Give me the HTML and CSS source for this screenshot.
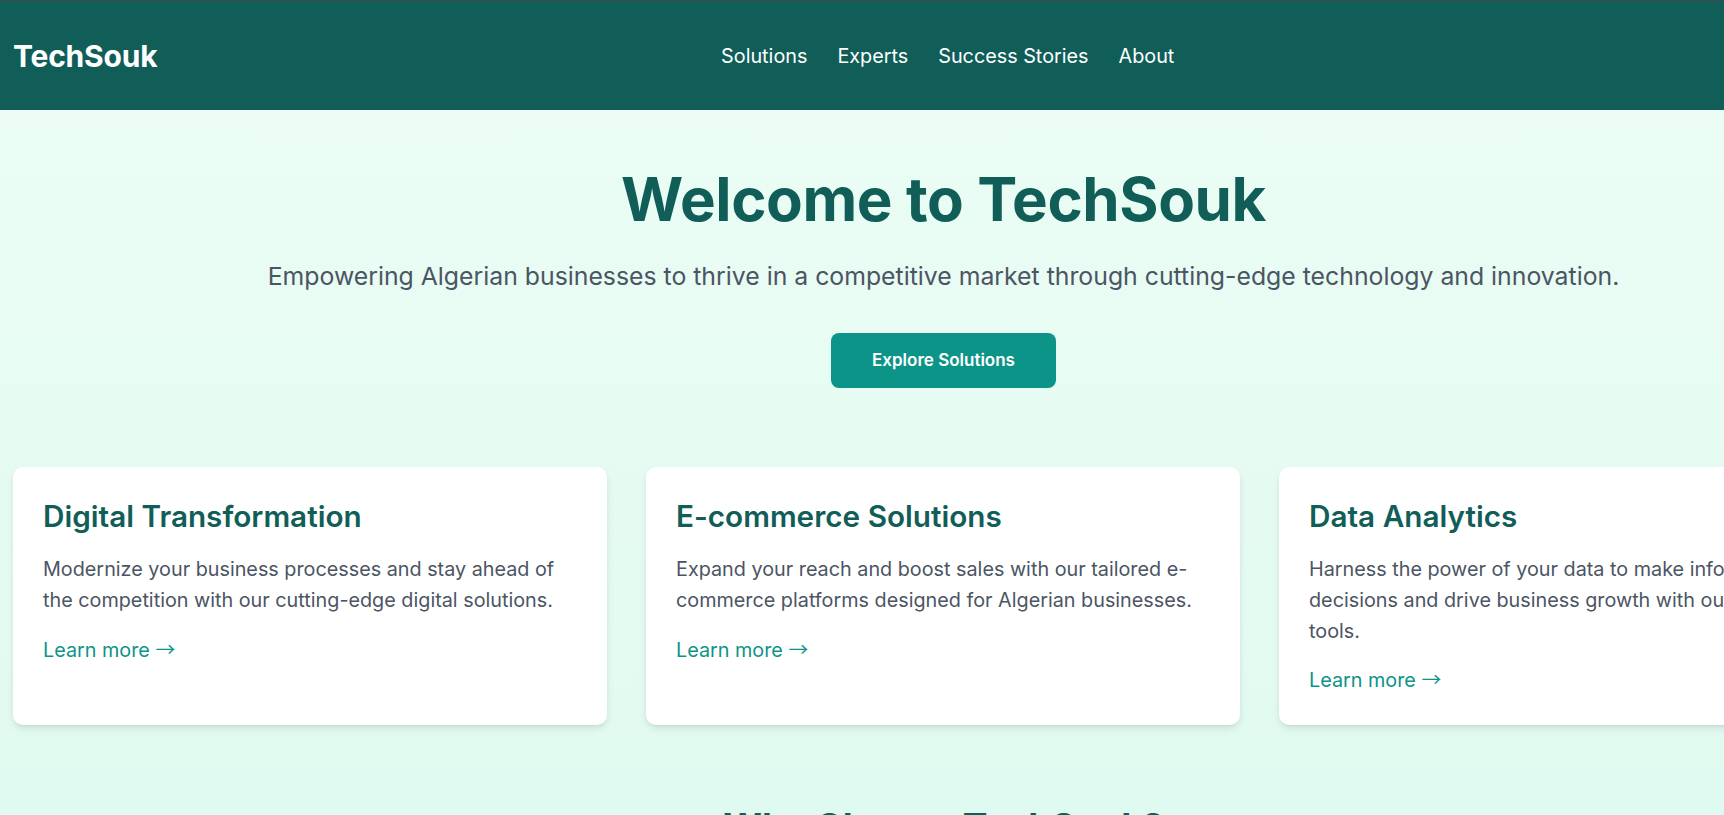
FILE: index.html
```html
<!DOCTYPE html>
<html lang="en">
<head>
<meta charset="utf-8">
<title>TechSouk</title>
<link rel="stylesheet" href="styles.css">
</head>
<body>
<div class="page">
  <header class="site-header">
    <a class="logo" href="#">TechSouk</a>
    <nav class="main-nav">
      <a href="#">Solutions</a>
      <a href="#">Experts</a>
      <a href="#">Success Stories</a>
      <a href="#">About</a>
    </nav>
    <div class="header-spacer"></div>
  </header>

  <section class="hero">
    <h1 class="hero-title">Welcome to TechSouk</h1>
    <p class="hero-sub">Empowering Algerian businesses to thrive in a competitive market through cutting-edge technology and innovation.</p>
    <a class="btn-primary" href="#">Explore Solutions</a>

    <div class="cards">
      <article class="card">
        <h3 class="card-title">Digital Transformation</h3>
        <p class="card-text">Modernize your business processes and stay ahead of the competition with our cutting-edge digital solutions.</p>
        <a class="card-link" href="#">Learn more <span class="arrow">→</span></a>
      </article>
      <article class="card">
        <h3 class="card-title">E-commerce Solutions</h3>
        <p class="card-text">Expand your reach and boost sales with our tailored e-commerce platforms designed for Algerian businesses.</p>
        <a class="card-link" href="#">Learn more <span class="arrow">→</span></a>
      </article>
      <article class="card">
        <h3 class="card-title">Data Analytics</h3>
        <p class="card-text">Harness the power of your data to make informed decisions and drive business growth with our analytics tools.</p>
        <a class="card-link" href="#">Learn more <span class="arrow">→</span></a>
      </article>
    </div>
  </section>

  <section class="why">
    <h2 class="why-title">Why Choose TechSouk?</h2>
  </section>
</div>
</body>
</html>
```

FILE: styles.css
```css
* { box-sizing: border-box; }

html, body {
  margin: 0;
  padding: 0;
}

body {
  font-family: Inter, "Noto Sans", sans-serif;
  background: #dffaf0;
}

a { text-decoration: none; }

.page {
  width: 1887px;
}

.site-header {
  height: 110px;
  background: #115e59;
  border-top: 1px solid #3f4946;
  padding: 0 13px;
  display: flex;
  align-items: center;
  justify-content: space-between;
}

.logo {
  color: #ffffff;
  font-size: 30px;
  font-weight: 700;
  letter-spacing: -0.2px;
}

.main-nav {
  display: flex;
  gap: 30px;
}

.main-nav a {
  color: #ffffff;
  font-size: 19.8px;
  font-weight: 400;
}

.header-spacer {
  width: 136px;
}

.hero {
  background: linear-gradient(180deg, #ebfdf5 0%, #e1faf0 100%);
  padding: 59px 13px 43px;
  text-align: center;
}

.hero-title {
  margin: 0;
  font-size: 60px;
  line-height: 60px;
  font-weight: 700;
  color: #115e59;
  letter-spacing: -0.4px;
}

.hero-sub {
  margin: 31px 0 0;
  font-size: 24.8px;
  line-height: 32px;
  color: #4b5563;
}

.btn-primary {
  display: inline-block;
  margin-top: 41px;
  background: #0d9488;
  color: #ffffff;
  font-size: 17px;
  font-weight: 600;
  line-height: 24px;
  padding: 15px 41px 16px;
  border-radius: 8px;
}

.cards {
  margin-top: 79px;
  display: grid;
  grid-template-columns: repeat(3, 594px);
  gap: 39px;
  text-align: left;
}

.card {
  background: #ffffff;
  border-radius: 10px;
  padding: 31px 30px 29px;
  box-shadow: 0 4px 8px -1px rgba(0, 0, 0, 0.1), 0 2px 4px -2px rgba(0, 0, 0, 0.08);
}

.card-title {
  margin: 0;
  font-size: 29.7px;
  line-height: 37px;
  font-weight: 600;
  color: #115e59;
}

.card-text {
  margin: 19px 0 0;
  font-size: 19.8px;
  line-height: 30.8px;
  color: #4b5563;
}

.card-link {
  display: inline-block;
  margin-top: 19px;
  font-size: 19.8px;
  line-height: 30.8px;
  height: 30.8px;
  color: #0d9488;
}

.arrow {
  font-family: "Noto Sans CJK SC", sans-serif;
  line-height: 1;
}

.why {
  background: #dffaf0;
  padding: 39px 13px 40px;
  text-align: center;
}

.why-title {
  margin: 0;
  font-size: 37px;
  line-height: 40px;
  font-weight: 700;
  color: #115e59;
}
```
